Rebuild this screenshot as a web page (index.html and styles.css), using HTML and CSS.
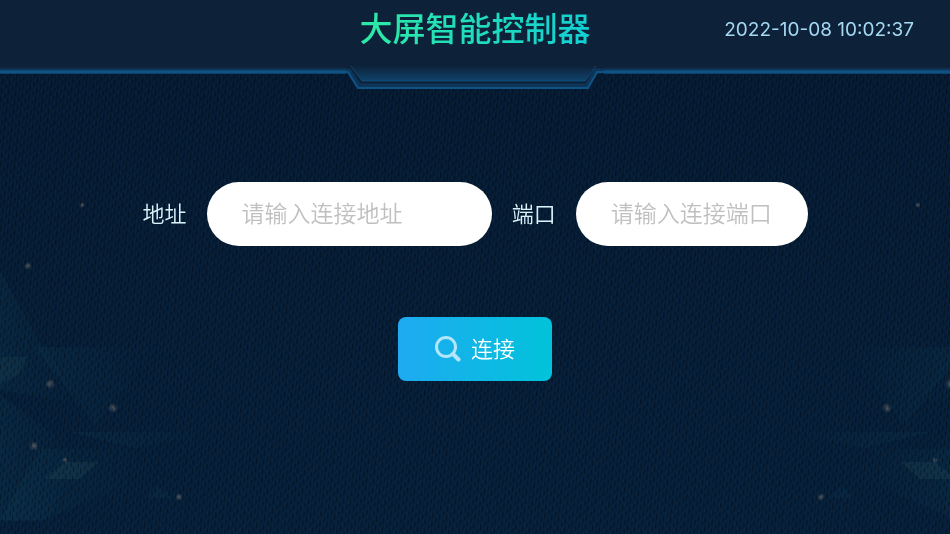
FILE: index.html
```html
<!DOCTYPE html>
<html lang="zh-CN">
<head>
    <meta charset="UTF-8">
    <meta name="viewport" content="width=device-width, initial-scale=1.0">
    <title>大屏智能控制器</title>
    <link rel="stylesheet" href="styles.css">
</head>
<body>
    <!-- Background: weave texture, shards and sparks -->
    <svg class="backdrop" viewBox="0 0 950 534" preserveAspectRatio="xMidYMid slice" aria-hidden="true">
        <defs>
            <pattern id="weave" width="7" height="9" patternUnits="userSpaceOnUse" patternTransform="skewX(-6) skewY(14)">
                <path d="M1 0v5M4 4v5" stroke="#010a12" stroke-opacity="0.6"/>
                <path d="M2 3v5M6 0v5" stroke="#0b2c50" stroke-opacity="0.4"/>
            </pattern>
            <radialGradient id="spark">
                <stop offset="0" stop-color="#8b8178" stop-opacity="0.6"/>
                <stop offset="1" stop-color="#8b8178" stop-opacity="0"/>
            </radialGradient>
            <linearGradient id="shard">
                <stop offset="0" stop-color="#125068" stop-opacity="0.16"/>
                <stop offset="1" stop-color="#125068" stop-opacity="0"/>
            </linearGradient>
            <g id="shards">
                <path d="M0 270L45 350L85 405L0 390z" fill="url(#shard)"/>
                <path d="M35 347H160L95 425z" fill="url(#shard)"/>
                <path d="M0 357H28L18 375L0 384z" fill="#2a5860" fill-opacity="0.2"/>
                <path d="M0 395L75 450L50 520H0z" fill="url(#shard)"/>
                <path d="M70 432H220L135 448z" fill="url(#shard)"/>
                <path d="M40 449H130L150 475L40 521H0z" fill="url(#shard)"/>
                <path d="M65 462H99L80 479H44z" fill="#2a5860" fill-opacity="0.25"/>
                <path d="M145 498L158 486L172 498z" fill="#125068" fill-opacity="0.12"/>
                <circle cx="28" cy="266" r="4" fill="url(#spark)"/>
                <circle cx="50" cy="384" r="5" fill="url(#spark)"/>
                <circle cx="113" cy="408" r="5" fill="url(#spark)"/>
                <circle cx="34" cy="446" r="5" fill="url(#spark)"/>
                <circle cx="65" cy="460" r="3" fill="url(#spark)"/>
                <circle cx="179" cy="497" r="4" fill="url(#spark)"/>
                <circle cx="82" cy="205" r="3" fill="url(#spark)"/>
            </g>
        </defs>
        <use href="#shards"/>
        <use href="#shards" transform="translate(1000 0) scale(-1 1)"/>
        <rect width="950" height="534" fill="url(#weave)"/>
    </svg>

    <header class="header">
        <div class="header-frame" aria-hidden="true">
            <div class="header-line"></div>
            <svg class="header-tab" width="258" height="90" viewBox="0 0 258 90">
                <defs>
                    <linearGradient id="tabGlow" x1="0" y1="0" x2="0" y2="1">
                        <stop offset="0" stop-color="#0f4a78" stop-opacity="0"/>
                        <stop offset="1" stop-color="#0f4a78" stop-opacity="0.8"/>
                    </linearGradient>
                </defs>
                <path d="M0 0H258V73H252L243 89H12L2 73H0z" fill="#0d2138"/>
                <path d="M5 65L16 81H239L250 65z" fill="url(#tabGlow)"/>
                <path d="M5 66L16 81H239L250 66" fill="none" stroke="#0f5588" stroke-opacity="0.7"/>
                <path d="M0 71H3L13 86H241L250 71H258" fill="none" stroke="#10659e" stroke-opacity="0.3" stroke-width="5"/>
                <path d="M0 72H2L12 88H242L251 72H258" fill="none" stroke="#0e5384" stroke-width="2"/>
            </svg>
            <div class="header-line"></div>
        </div>
        <h1 class="title">大屏智能控制器</h1>
        <time class="clock" datetime="2022-10-08T10:02:37">2022-10-08 10:02:37</time>
    </header>

    <main>
        <form class="connect-form">
            <div class="fields">
                <label for="address">地址</label>
                <input type="text" id="address" placeholder="请输入连接地址">
                <label for="port">端口</label>
                <input type="text" id="port" placeholder="请输入连接端口">
            </div>
            <button type="button" class="connect-btn">
                <svg width="26" height="26" viewBox="0 0 26 26" fill="none" stroke="#b4e6fb" aria-hidden="true">
                    <circle cx="11" cy="11" r="9.500" stroke-width="3"/>
                    <path d="M18 18L23.500 23.500" stroke-width="4" stroke-linecap="round"/>
                </svg>
                <span>连接</span>
            </button>
        </form>
    </main>
</body>
</html>
```

FILE: styles.css
```css
* {
    box-sizing: border-box;
}
body {
    font-family: "Noto Sans CJK SC", sans-serif;
    margin: 0;
    min-height: 100vh;
    background: linear-gradient(#061a31, #07203a);
    color: #d9f3fb;
}
.backdrop {
    position: fixed;
    top: 0;
    left: 0;
    width: 100%;
    height: 100%;
    z-index: -1;
}
.header {
    position: relative;
    display: grid;
    grid-template-columns: 1fr auto 1fr;
    align-items: center;
    height: 58px;
    padding: 0 36px;
}
.header-frame {
    position: absolute;
    top: 0;
    left: 0;
    right: 0;
    z-index: -1;
    display: flex;
    align-items: flex-start;
}
.header-line {
    flex: 1;
    height: 74px;
    background: linear-gradient(#0d2138 67px, #0e3a5e 70px, #0e5384 71px, #0e5384 73px, #0d2f50 74px);
}
.header-tab {
    display: block;
}
.title {
    grid-column: 2;
    margin: 0;
    padding-bottom: 4px;
    font-size: 33px;
    line-height: 48px;
    font-weight: 500;
    background: linear-gradient(to right, #2eeaa5, #12cfd4);
    -webkit-background-clip: text;
    background-clip: text;
    color: transparent;
}
.clock {
    justify-self: end;
    font-family: Inter, sans-serif;
    font-size: 19px;
    color: #a5d8f3;
}
.connect-form {
    display: flex;
    flex-direction: column;
    align-items: center;
    gap: 71px;
    padding-top: 124px;
}
.fields {
    display: grid;
    grid-template-columns: auto 16fr auto 13fr;
    align-items: center;
    gap: 20px;
    width: 70%;
}
.fields label {
    padding-bottom: 4px;
    font-size: 22px;
    font-weight: 350;
}
.fields input {
    width: 100%;
    min-width: 0;
    height: 64px;
    padding: 0 35px 4px;
    border: none;
    border-radius: 32px;
    background-color: #ffffff;
    color: #333333;
    font-family: inherit;
    font-size: 23px;
    font-weight: 350;
}
.fields input::placeholder {
    color: #c0c0c0;
}
.connect-btn {
    display: flex;
    justify-content: center;
    align-items: center;
    gap: 10px;
    height: 64px;
    padding: 0 37px;
    border: none;
    border-radius: 8px;
    background: linear-gradient(to right, #1eaaf1, #02c3da);
    color: #ffffff;
    font-family: inherit;
    font-size: 22px;
    font-weight: 350;
    cursor: pointer;
}
.connect-btn span {
    padding-bottom: 4px;
}
```
